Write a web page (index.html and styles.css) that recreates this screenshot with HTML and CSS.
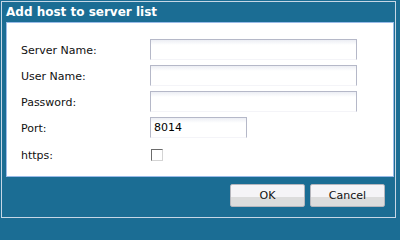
FILE: index.html
```html
<!DOCTYPE html>
<html>
<head>
<meta charset="utf-8">
<link rel="stylesheet" href="styles.css">
</head>
<body>
<div class="frame">
  <div class="title">Add host to server list</div>
  <div class="panel">
    <div class="row"><label class="lbl">Server Name:</label><span class="field wide"></span></div>
    <div class="row"><label class="lbl">User Name:</label><span class="field wide"></span></div>
    <div class="row"><label class="lbl">Password:</label><span class="field wide"></span></div>
    <div class="row"><label class="lbl">Port:</label><span class="field narrow">8014</span></div>
    <div class="row check-row"><label class="lbl">https:</label><span class="checkbox"></span></div>
  </div>
  <div class="buttons">
    <span class="btn">OK</span>
    <span class="btn">Cancel</span>
  </div>
</div>
</body>
</html>
```
FILE: styles.css
```css
* { box-sizing: border-box; }
html, body {
  margin: 0;
  padding: 0;
  width: 400px;
  height: 220px;
  background: #1b6d94;
  overflow: hidden;
}
body {
  font-family: "DejaVu Sans", Verdana, sans-serif;
  font-size: 11px;
  color: #000;
  padding: 1px 0 0 1px;
}
.frame {
  width: 395px;
  height: 217px;
  border: 1px solid #c6d7e6;
  display: flex;
  flex-direction: column;
}
.title {
  height: 20px;
  padding-left: 4px;
  line-height: 20px;
  color: #fff;
  font-weight: bold;
  font-size: 12px;
}
.panel {
  margin-left: 4px;
  width: 388px;
  height: 155px;
  background: #fff;
  border: 1px solid #99bbe8;
  padding: 16px 0 0 14px;
  display: flex;
  flex-direction: column;
  gap: 5px;
}
.row {
  display: flex;
  align-items: center;
  height: 21px;
}
.check-row {
  margin-top: 5px;
  height: 13px;
}
.lbl {
  width: 129px;
  color: #111;
  padding-top: 2px;
}
.field {
  height: 21px;
  border: 1px solid #b5b8c8;
  border-bottom-color: #f4f4f8;
  background: linear-gradient(#eceef4 0, #fff 5px, #fff 100%);
  padding: 3px 0 0 3px;
  line-height: 14px;
}
.wide { width: 207px; }
.narrow { width: 97px; }
.checkbox {
  margin-left: 1px;
  width: 12px;
  height: 12px;
  background: #fff;
  border: 1px solid #d4d4d4;
  border-top-color: #6b6b6b;
  border-left-color: #6b6b6b;
}
.buttons {
  display: flex;
  justify-content: flex-end;
  gap: 5px;
  padding: 7px 10px 0 0;
}
.btn {
  width: 75px;
  height: 23px;
  border: 1px solid #b6b6bd;
  border-radius: 2px;
  background: linear-gradient(#f5f4f7 0, #f5f4f7 58%, #dcdcdc 58%, #dcdcdc 100%);
  text-align: center;
  line-height: 21px;
  color: #111;
}
```
